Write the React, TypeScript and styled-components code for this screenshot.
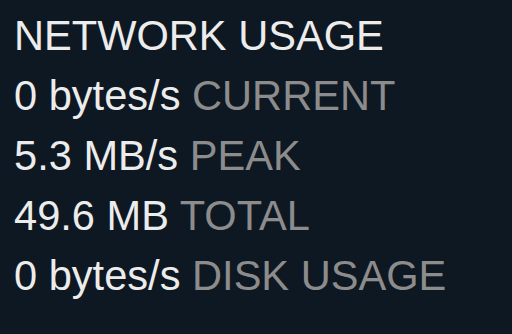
import React from "react";
import styled, { createGlobalStyle } from "styled-components";

const Global = createGlobalStyle`
  html, body { margin: 0; padding: 0; background: #0e1822; }
  body { font-family: "Liberation Sans", Arial, sans-serif; }
`;

const Panel = styled.div`
  width: 512px;
  height: 334px;
  box-sizing: border-box;
  padding: 6px 0 0 14px;
  background: #0e1822;
  display: flex;
  flex-direction: column;
`;

const Line = styled.div`
  font-size: 41.6px;
  line-height: 60px;
  color: #ececec;
  white-space: nowrap;
`;

const Label = styled.span`
  color: #8c8c8c;
`;

const stats = [
  { value: "0 bytes/s", label: "CURRENT" },
  { value: "5.3 MB/s", label: "PEAK" },
  { value: "49.6 MB", label: "TOTAL" },
  { value: "0 bytes/s", label: "DISK USAGE" },
];

export default function App() {
  return (
    <>
      <Global />
      <Panel>
        <Line>NETWORK USAGE</Line>
        {stats.map((s) => (
          <Line key={s.label}>
            {s.value} <Label>{s.label}</Label>
          </Line>
        ))}
      </Panel>
    </>
  );
}
